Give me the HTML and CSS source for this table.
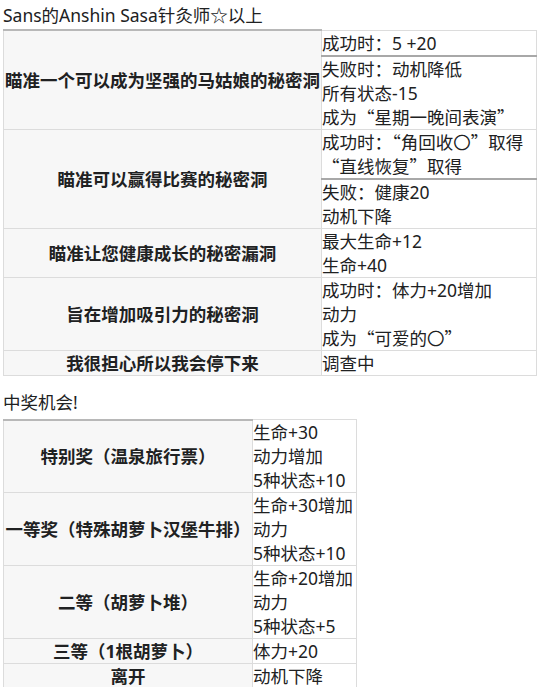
FILE: index.html
```html
<!DOCTYPE html>
<html lang="zh-CN">
<head>
<meta charset="utf-8">
<link rel="stylesheet" href="styles.css">
</head>
<body>
<p class="caption">Sans的Anshin Sasa针灸师☆以上</p>
<table class="wikitable t1">
  <tr>
    <th rowspan="2">瞄准一个可以成为坚强的马姑娘的秘密洞</th>
    <td class="split">成功时：5 +20</td>
  </tr>
  <tr>
    <td>失败时：动机降低<br>所有状态-15<br>成为<span class="q">“</span>星期一晚间表演<span class="q">”</span></td>
  </tr>
  <tr>
    <th rowspan="2">瞄准可以赢得比赛的秘密洞</th>
    <td class="split">成功时：<span class="q">“</span>角回收〇<span class="q">”</span>取得<br><span class="q">“</span>直线恢复<span class="q">”</span>取得</td>
  </tr>
  <tr>
    <td>失败：健康20<br>动机下降</td>
  </tr>
  <tr>
    <th>瞄准让您健康成长的秘密漏洞</th>
    <td>最大生命+12<br>生命+40</td>
  </tr>
  <tr>
    <th>旨在增加吸引力的秘密洞</th>
    <td>成功时：体力+20增加<br>动力<br>成为<span class="q">“</span>可爱的〇<span class="q">”</span></td>
  </tr>
  <tr>
    <th>我很担心所以我会停下来</th>
    <td>调查中</td>
  </tr>
</table>
<p class="caption second">中奖机会!</p>
<table class="wikitable t2">
  <tr>
    <th>特别奖（温泉旅行票）</th>
    <td>生命+30<br>动力增加<br>5种状态+10</td>
  </tr>
  <tr>
    <th>一等奖（特殊胡萝卜汉堡牛排）</th>
    <td>生命+30增加<br>动力<br>5种状态+10</td>
  </tr>
  <tr>
    <th>二等（胡萝卜堆）</th>
    <td>生命+20增加<br>动力<br>5种状态+5</td>
  </tr>
  <tr>
    <th>三等（1根胡萝卜）</th>
    <td>体力+20</td>
  </tr>
  <tr>
    <th>离开</th>
    <td>动机下降</td>
  </tr>
</table>
</body>
</html>
```
FILE: styles.css
```css
html, body {
  margin: 0;
  padding: 0;
  background: #ffffff;
}
body {
  padding: 3px 3px 0 3px;
  font-family: "Noto Sans", "Noto Sans CJK SC", sans-serif;
  font-size: 17.5px;
  line-height: 24px;
  color: #202122;
}
.caption {
  margin: 0 0 2px 0;
  line-height: 24px;
}
.caption.second {
  margin: 14px 0 5px 0;
}
.q {
  font-family: "Noto Sans CJK SC", sans-serif;
}
.wikitable {
  border-collapse: collapse;
  table-layout: fixed;
}
.wikitable th,
.wikitable td {
  border: 1px solid #dcdcdc;
  padding: 0;
  line-height: 24px;
  font-size: 17.5px;
}
.wikitable th {
  background: #f7f7f7;
  font-weight: bold;
  text-align: center;
  vertical-align: middle;
  white-space: nowrap;
}
.wikitable td {
  background: #ffffff;
  text-align: left;
  vertical-align: top;
}
.wikitable tr:first-child th {
  border-top: 2px solid #b8b8b8;
}
.wikitable td.split {
  border-bottom: 2px solid #a8a8a8;
}
.t1 {
  width: 534px;
}
.t1 th {
  width: 317px;
}
.t2 {
  width: 354px;
}
.t2 th {
  width: 248px;
}
```
